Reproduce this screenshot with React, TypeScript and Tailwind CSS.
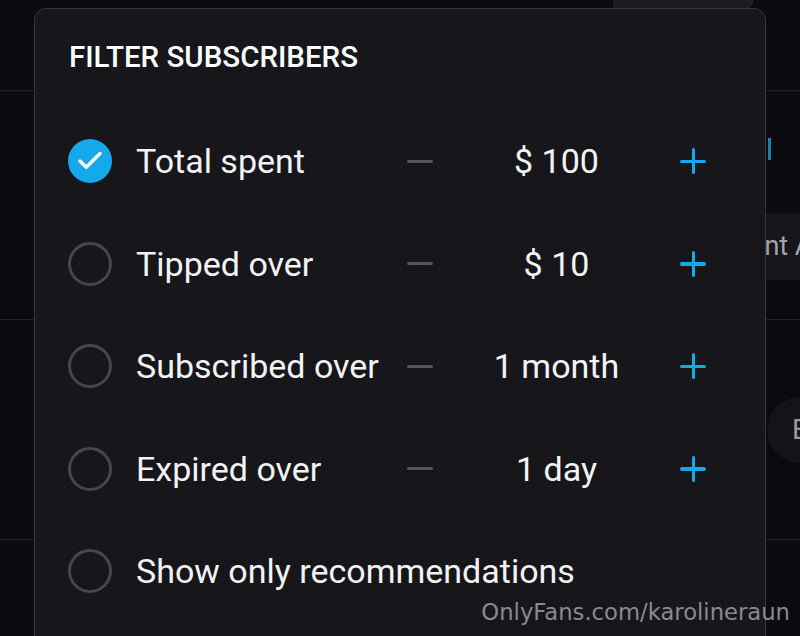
import { Check } from 'lucide-react';

type FilterRow = {
  label: string;
  value?: string;
  checked?: boolean;
};

const rows: FilterRow[] = [
  { label: 'Total spent', value: '$ 100', checked: true },
  { label: 'Tipped over', value: '$ 10' },
  { label: 'Subscribed over', value: '1 month' },
  { label: 'Expired over', value: '1 day' },
  { label: 'Show only recommendations' },
];

function CheckCircle({ checked }: { checked?: boolean }) {
  if (checked) {
    return (
      <div className="w-[44px] h-[44px] shrink-0 rounded-full bg-[#14a9ea] flex items-center justify-center">
        <Check className="w-[30px] h-[30px] text-white" strokeWidth={2.8} />
      </div>
    );
  }
  return <div className="w-[44px] h-[44px] shrink-0 rounded-full border-[3px] border-[#46464b]" />;
}

function Row({ row }: { row: FilterRow }) {
  return (
    <div className="h-[102.5px] flex items-center pl-[33px]">
      <CheckCircle checked={row.checked} />
      <span className="ml-[24px] w-[271px] shrink-0 whitespace-nowrap text-[34px] leading-[40px] text-[#f3f3f5]">
        {row.label}
      </span>
      {row.value && (
        <>
          {/* stepper: minus / value / plus */}
          <div className="w-[26px] h-[3px] rounded-full bg-[#55555a]" />
          <span className="w-[247px] text-center text-[34px] leading-[40px] text-[#f3f3f5]">{row.value}</span>
          <div className="relative w-[26px] h-[26px]">
            <div className="absolute left-0 top-[11.5px] w-[26px] h-[3.5px] rounded-full bg-[#14a9ea]" />
            <div className="absolute top-0 left-[11.5px] w-[3.5px] h-[26px] rounded-full bg-[#14a9ea]" />
          </div>
        </>
      )}
    </div>
  );
}

export default function App() {
  return (
    <div className="relative w-[800px] h-[636px] overflow-hidden bg-[#0b0b0f] font-['Roboto',_'Liberation_Sans',_sans-serif]">
      {/* page behind the sheet */}
      <div className="flex flex-col">
        <div className="h-[91px] border-b border-[#242428] flex justify-end">
          <div className="mr-[47px] w-[140px] h-[9px] rounded-br-[12px] bg-[#1c1c20] border-b border-r border-[#2c2c31]" />
        </div>
        <div className="h-[229px] border-b border-[#242428] flex flex-col">
          <div className="h-[122px] flex justify-end items-start pt-[47px]">
            <div className="mr-[29px] w-[3px] h-[22px] bg-[#1b7fa6]" />
          </div>
          <div className="h-[67px] ml-[740px] bg-[#16161a] flex items-center whitespace-nowrap overflow-hidden text-[27px] text-[#a3a3a8]">
            <span className="-ml-[35px]">Recent Activity</span>
          </div>
        </div>
        <div className="h-[220px] border-b border-[#242428] flex items-center">
          <div className="ml-[767px] w-[66px] h-[66px] shrink-0 rounded-full bg-[#141418] flex items-center pl-[25px] text-[28px] text-[#9a9a9f]">
            E
          </div>
        </div>
        <div className="flex-1 h-[96px] bg-[#0e1114]" />
      </div>

      {/* filter sheet */}
      <div className="absolute left-[34px] top-[8px] w-[732px] h-[640px] rounded-t-[12px] bg-[#17171b] border border-[#36363b]">
        <h2 className="pl-[34px] pt-[32px] text-[29.5px] leading-[32px] font-medium text-white">FILTER SUBSCRIBERS</h2>
        <div className="mt-[37px] flex flex-col">
          {rows.map((row) => (
            <Row key={row.label} row={row} />
          ))}
        </div>
      </div>

      <div className="absolute right-[10px] bottom-[13px] text-[22.7px] leading-[22px] text-[#8a8a8e] font-['DejaVu_Sans',_sans-serif]">
        OnlyFans.com/karolineraun
      </div>
    </div>
  );
}
